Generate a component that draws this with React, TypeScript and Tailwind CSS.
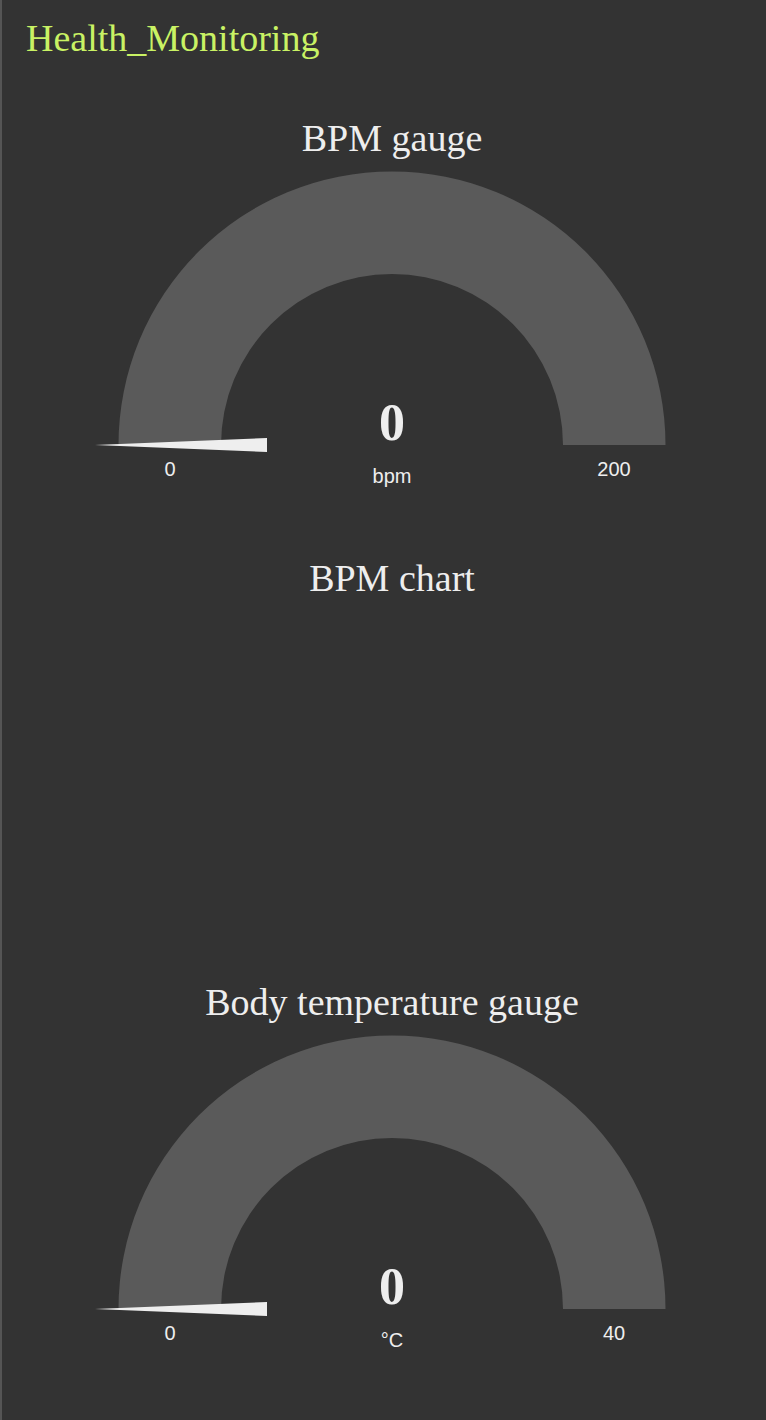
type GaugeProps = {
  title: string;
  value: number;
  min: number;
  max: number;
  unit: string;
};

const heading = "text-center text-[38px] leading-[44px] text-[#eeeeee]";

function Gauge({ title, value, min, max, unit }: GaugeProps) {
  const angle = ((value - min) / (max - min)) * 180;

  return (
    <section>
      <h2 className={heading}>{title}</h2>
      <svg
        viewBox="0 0 732 360"
        className="block h-auto w-full"
        role="img"
        aria-label={title}
      >
        <path
          d="M92.5 285A273.5 273.5 0 0 1 639.5 285H537A171 171 0 0 0 195 285Z"
          fill="#5a5a5a"
        />
        <path
          d="M69 285L241 278V292Z"
          fill="#eeeeee"
          transform={`rotate(${angle} 366 285)`}
        />
        <g fill="#eeeeee" textAnchor="middle">
          <text x="366" y="280" className="text-[52px] font-bold">
            {value}
          </text>
          <g className="font-['Liberation_Sans',Arial,sans-serif] text-[20px]">
            <text x="366" y="323">{unit}</text>
            <text x="144" y="316">{min}</text>
            <text x="588" y="316">{max}</text>
          </g>
        </g>
      </svg>
    </section>
  );
}

export default function App() {
  return (
    <main className="min-h-screen border-l-2 border-[#555555] bg-[#333333] pt-4 pr-2 pb-9 pl-6 font-['Liberation_Serif','Times_New_Roman',serif]">
      <h1 className="text-[38px] leading-[44px] text-[#c9f264]">
        Health_Monitoring
      </h1>
      <div className="mt-14 flex flex-col gap-9">
        <Gauge title="BPM gauge" value={0} min={0} max={200} unit="bpm" />
        <section>
          <h2 className={heading}>BPM chart</h2>
          <div className="h-[344px]" />
        </section>
        <Gauge
          title="Body temperature gauge"
          value={0}
          min={0}
          max={40}
          unit="°C"
        />
      </div>
    </main>
  );
}
